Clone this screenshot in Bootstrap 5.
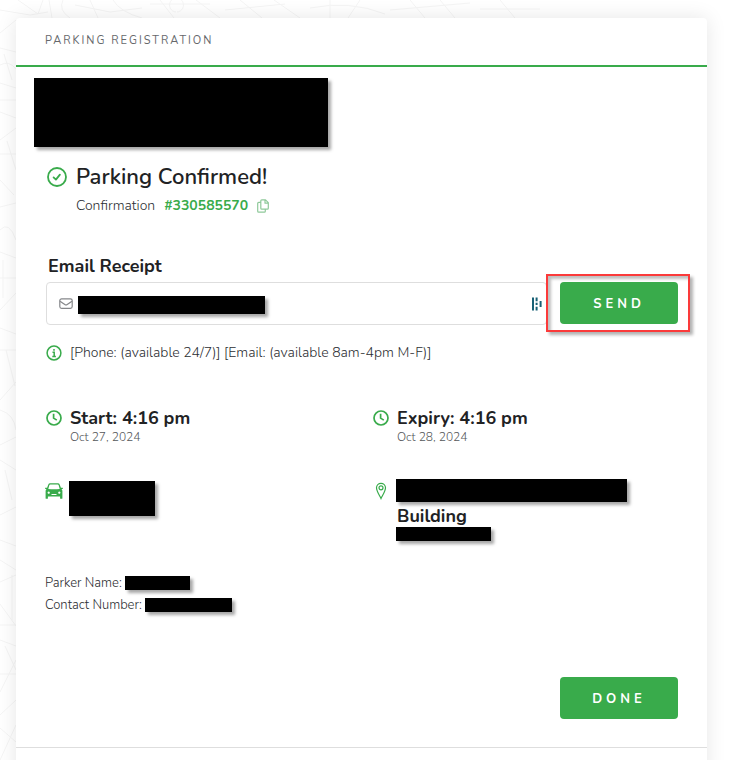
<!DOCTYPE html>
<html lang="en">
<head>
<meta charset="utf-8">
<meta name="viewport" content="width=device-width, initial-scale=1">
<title>Parking Registration</title>
<link href="https://cdn.jsdelivr.net/npm/bootstrap@5.3.0/dist/css/bootstrap.min.css" rel="stylesheet">
<style>
:root{--green:#39ab4b;--ink:#212224}
body{font-family:Nunito,"Open Sans","Noto Sans",sans-serif;background:#fff;color:#2c2e32;font-size:14px;line-height:24px;overflow-x:hidden}
.page{padding:18px 39px 0 16px;min-height:100vh}
.map-lines{position:absolute;left:0;top:0;z-index:-1;stroke:#f5f5f5;fill:none}
.sheet{--bs-card-border-width:0;--bs-card-border-radius:4px;box-shadow:0 0 20px rgba(0,0,0,.1);min-height:100vh}
.sheet-head{height:49px;padding:0 29px;border-bottom:2px solid var(--green)}
.sheet-head h1{font-size:11px;letter-spacing:2px;line-height:45px;color:#66686b}
.sheet-body{padding:11px 0 28px 18px;border-bottom:1px solid #dedede}
.inner{padding-left:12px;padding-right:29px}
.grid-pair{padding-left:12px;padding-right:7px}
.redact{background:#000;box-shadow:3px 3px 3px rgba(0,0,0,.35);display:block}
.r-logo{width:294px;height:69px}
.r-mail{width:187px;height:18px;position:absolute;left:32px;top:14px}
.r-car{width:86px;height:35px;margin:2px 0 0 -1px}
.r-addr{width:231px;height:23px;margin-left:-1px}
.r-zone{width:95px;height:14px;margin-left:-1px}
.r-name{width:65px;height:14px}
.r-phone{width:87px;height:14px}
svg{flex:none}
.green{color:var(--green)}
.h-main{font-size:22px;font-weight:600;line-height:30px;color:var(--ink)}
.h-sub{font-size:18px;font-weight:700;line-height:22px;color:var(--ink)}
.thin{font-weight:300}
.date{font-size:12px;line-height:16px;font-weight:300;color:#55575a}
.place-name{padding-top:3px}
.conf{padding-left:30px;gap:9px}
.conf strong{font-weight:700}
.detail{font-size:13px;line-height:22px;padding-left:11px}
.detail div{gap:3px}
.email-label{padding-left:2px}
.email-row{gap:13px;margin-top:5px}
.email-box input{height:43px;border:1px solid #dedede;border-radius:4px;padding-left:32px}
.email-box .ic-mail{position:absolute;left:13px;top:15px}
.email-box .ic-key{position:absolute;right:5px;top:15px}
.btn-go{--bs-btn-bg:#39ab4b;--bs-btn-color:#fff;--bs-btn-hover-bg:#2f9340;--bs-btn-hover-color:#fff;--bs-btn-border-width:0;--bs-btn-border-radius:4px;font-size:13px;font-weight:700;letter-spacing:4px;line-height:42px;height:42px;min-width:118px;padding:1px 0 0}
.callout{position:absolute;inset:-8px -12px -8px -14px;border:2px solid #fb3a3a;box-shadow:3px 3px 3px rgba(0,0,0,.3),inset 3px 3px 3px rgba(0,0,0,.25);pointer-events:none}
.ic-clock{margin-top:3px}
.ic-car{margin:4px -1px 0}
.g8{gap:8px}
.t-title{margin-top:15px}.t-conf{margin-top:2px}.t-email{margin-top:37px}.t-info{margin-top:16px}.t-time{margin-top:42px}.t-place{margin-top:34px}.t-detail{margin-top:31px}.t-done{margin-top:61px}
</style>
<script src="https://cdn.jsdelivr.net/npm/bootstrap@5.3.0/dist/js/bootstrap.bundle.min.js"></script>
</head>
<body>
<svg class="map-lines" width="100%" height="760" aria-hidden="true">
<path d="M0 10L30 15 48 12M18 0L38 14 43 0M49 0L52 18M63 0Q58 10 70 18M75 5L110 12 142 8M90 0L98 18M113 0Q120 12 142 18M150 4H210M160 0L174 18M176 12a7 7 0 1 1 1 0M196 0L220 18M225 10L285 4M240 0L262 18M274 0L300 18M310 8Q350 0 385 14M330 0V18M360 0L348 18M390 10L470 3M410 0L425 18M440 0L455 18M480 9H540M500 0L515 18"/>
<path d="M0 33L16 20M0 48L16 52M4 54L12 80M0 65Q9 60 16 69M0 83L16 88M0 100H16M0 112L16 118M0 140L16 128M0 154H16M7 141L16 170M0 180L14 195M0 207L16 203M0 230Q9 220 16 240M0 252L16 258M3 260V298M0 278H16M0 310L16 293M0 328L16 334M0 350H16M6 350L15 386M0 400L16 382M0 410Q14 414 16 430M0 445L16 437M0 460L16 470M5 470L12 500M0 515L16 507M0 540L16 546M0 560L16 570M0 582L16 575M12 575V620M0 604L16 626M0 625H16M0 640L16 646M5 646L16 670M0 674H16M0 692L16 660M0 715L16 700M0 728L16 742M0 760L16 725"/>
</svg>
<main class="page">
<div class="card sheet">
  <header class="sheet-head"><h1 class="m-0 fw-normal">PARKING REGISTRATION</h1></header>
  <div class="sheet-body">
    <span class="redact r-logo"></span>
    <section class="inner t-title">
      <div class="d-flex align-items-center g8">
        <svg class="green" width="22" height="22" viewBox="0 0 22 22" fill="none" stroke="currentColor" stroke-width="1.8"><circle cx="11" cy="11" r="9"/><path d="M7.6 11.4l2.3 2.2 4-5" stroke-linecap="round" stroke-linejoin="round"/></svg>
        <h2 class="m-0 h-main">Parking Confirmed!</h2>
      </div>
      <div class="conf t-conf d-flex align-items-center">
        <span class="thin">Confirmation</span><strong class="green">#330585570</strong>
        <button type="button" class="btn p-0 border-0 lh-1 d-flex" aria-label="Copy confirmation number"><svg width="12" height="14" viewBox="0 0 12 14" fill="none" stroke="#8fc99a" stroke-width="1.2" stroke-linejoin="round"><path d="M4.8 .8h3.7l2.8 2.8v5.6a1 1 0 0 1-1 1H4.8a1 1 0 0 1-1-1V1.8a1 1 0 0 1 1-1zM8 .8v3.4h3.3M3.8 3.4H1.7a1 1 0 0 0-1 1v7.8a1 1 0 0 0 1 1h5.6a1 1 0 0 0 1-1v-2"/></svg></button>
      </div>
    </section>
    <section class="inner t-email">
      <label class="d-block h-sub email-label" for="email">Email Receipt</label>
      <div class="email-row d-flex align-items-start">
        <div class="email-box position-relative flex-grow-1">
          <input id="email" type="email" class="form-control shadow-none">
          <svg class="ic-mail" width="14" height="13" viewBox="0 0 14 13" fill="none" stroke="#85878a" stroke-width="1.2"><rect x=".8" y="1.8" width="12.4" height="9.6" rx="1.8"/><path d="M1 4.3l4.8 3.3q1.2 .8 2.4 0L13 4.3"/></svg>
          <span class="redact r-mail"></span>
          <svg class="ic-key" width="10" height="14" viewBox="0 0 10 14" fill="#176075"><path d="M0 .5h2v13H0zM3.6 .5h2v3.8h-2zM3.6 5.8h2v2.2h-2zM3.6 9.7h2v3.8h-2zM7.6 4h2v6h-2z"/></svg>
        </div>
        <div class="position-relative">
          <button type="button" class="btn btn-go d-block">SEND</button>
          <span class="callout"></span>
        </div>
      </div>
      <div class="d-flex align-items-center g8 t-info">
        <svg class="green" width="16" height="16" viewBox="0 0 16 16" fill="none" stroke="currentColor" stroke-width="1.5"><circle cx="8" cy="8" r="6.9"/><path d="M6.5 7.2h1.7v4M6.3 11.4h3.6M8 4v1.7"/></svg>
        <span class="thin">[Phone: (available 24/7)] [Email: (available 8am-4pm M-F)]</span>
      </div>
    </section>
    <section class="grid-pair">
      <div class="row g-0 t-time">
        <div class="col-6 d-flex g8">
          <svg class="green ic-clock" width="16" height="16" viewBox="0 0 16 16" fill="none" stroke="currentColor" stroke-width="1.7"><circle cx="8" cy="8" r="7"/><path d="M7.6 3.8v4.3l3.2 2"/></svg>
          <div><h3 class="m-0 h-sub">Start: 4:16 pm</h3><div class="date">Oct 27, 2024</div></div>
        </div>
        <div class="col-6 d-flex g8">
          <svg class="green ic-clock" width="16" height="16" viewBox="0 0 16 16" fill="none" stroke="currentColor" stroke-width="1.7"><circle cx="8" cy="8" r="7"/><path d="M7.6 3.8v4.3l3.2 2"/></svg>
          <div><h3 class="m-0 h-sub">Expiry: 4:16 pm</h3><div class="date">Oct 28, 2024</div></div>
        </div>
      </div>
      <div class="row g-0 t-place">
        <div class="col-6 d-flex g8">
          <svg class="green ic-car" width="18" height="16" viewBox="0 0 18 16"><path fill="currentColor" fill-rule="evenodd" d="M5.2 .3h7.6q1.5 0 2 1.4L15.9 4.8h1.7q.4 0 .4 .5t-.7 .6h-.8q.9 .8 .9 2v7.3q0 .5-.5 .5h-1.3q-.5 0-.5-.5v-1.7H2.9v1.7q0 .5-.5 .5H1.1q-.5 0-.5-.5V7.9q0-1.2 .9-2H.7Q0 5.9 0 5.3t.4-.5H2.1L3.2 1.7Q3.7 .3 5.2 .3zM5.3 1.5q-.7 0-.9 .6L3.3 5.9q5.7 .8 11.4 0L13.6 2.1q-.2-.6-.9-.6zM3.7 8.5a1.1 1.1 0 1 0 .01 0zM14.3 8.5a1.1 1.1 0 1 0 .01 0zM6.500 11v1h5v-1z"/></svg>
          <span class="redact r-car"></span>
        </div>
        <div class="col-6 d-flex g8">
          <svg class="green" width="16" height="24" viewBox="0 0 16 24" fill="none" stroke="currentColor" stroke-width="1.2"><path d="M8 19.5C6.7 16.5 3.5 12.5 3.5 8.8a4.5 4.5 0 0 1 9 0C12.5 12.5 9.3 16.5 8 19.5z"/><circle cx="8" cy="8.8" r="2"/></svg>
          <div><span class="redact r-addr"></span><div class="h-sub place-name">Building</div><span class="redact r-zone"></span></div>
        </div>
      </div>
    </section>
    <section class="detail thin t-detail">
      <div class="d-flex align-items-center">Parker Name: <span class="redact r-name"></span></div>
      <div class="d-flex align-items-center">Contact Number: <span class="redact r-phone"></span></div>
    </section>
    <div class="inner d-flex justify-content-end t-done"><button type="button" class="btn btn-go">DONE</button></div>
  </div>
</div>
</main>
</body>
</html>
